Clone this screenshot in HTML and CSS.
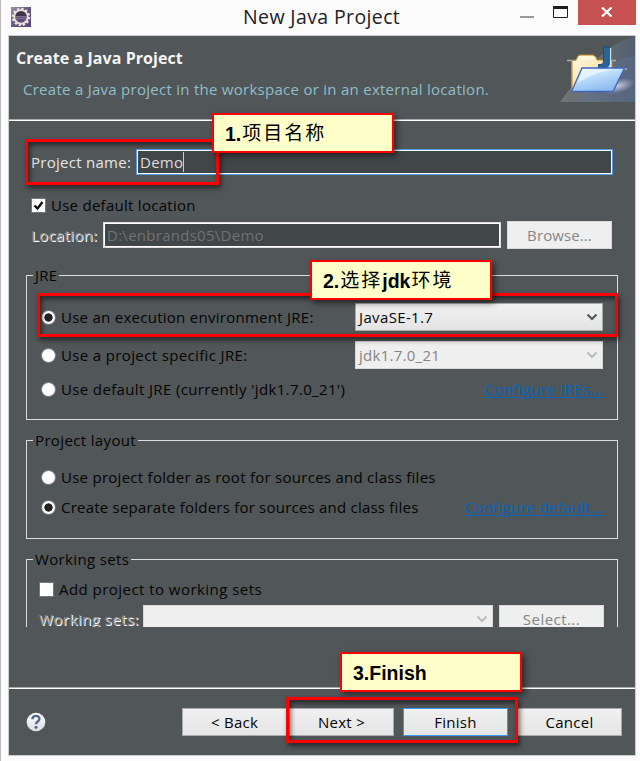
FILE: index.html
```html
<!DOCTYPE html>
<html lang="en">
<head>
<meta charset="utf-8">
<title>New Java Project</title>
<link rel="stylesheet" href="styles.css">
</head>
<body>
<div class="window">
  <header class="titlebar">
    <svg class="app-icon" viewBox="0 0 20 20">
      <defs><linearGradient id="purple" x2="1" y2="1"><stop stop-color="#9a91a8"/><stop offset=".5" stop-color="#67587c"/><stop offset="1" stop-color="#5e4181"/></linearGradient></defs>
      <path fill="url(#purple)" d="M0 0h20v20H0z"/>
      <circle cx="10" cy="10" r="8.200" fill="none" stroke="#eee9e5" stroke-width="2" stroke-dasharray="2.300 1.990"/>
      <circle cx="10" cy="10" r="6.700" fill="#5d5078" stroke="#e8e1dc" stroke-width="1.900"/>
      <path d="M4.400 9a5.700 5.700 0 0 1 11.200 0z" fill="#3b3748"/>
      <path d="M4.500 9.500h11M4.500 11.500h11" stroke="#8e81a0" stroke-width=".8"/>
    </svg>
    <h1><span class="t-title">New Java Project</span></h1>
    <div class="controls">
      <svg class="min-max" viewBox="0 0 50 25"><path d="M0 17h14" stroke="#999" stroke-width="2"/><path d="M33.500 8v9.500h14V8" fill="none" stroke="#1e1e1e"/><path d="M33 6h15v3H33z" fill="#1e1e1e"/></svg>
      <div class="close"><svg viewBox="0 0 12 10"><path d="M1 .5l9.500 9M10.500 .5L1 9.500" stroke="#fff" stroke-width="2.200"/></svg></div>
    </div>
  </header>
  <main class="dialog">
    <section class="banner">
      <div class="banner-text">
        <h2>Create a Java Project</h2>
        <p>Create a Java project in the workspace or in an external location.</p>
      </div>
      <svg class="banner-icon" viewBox="0 0 75 66">
        <defs>
          <linearGradient id="sweep" x2="1" y2=".2"><stop stop-color="#8c8e91"/><stop offset=".55" stop-color="#727982"/><stop offset="1" stop-color="#53627d"/></linearGradient>
          <linearGradient id="blue" x2=".5" y2="1"><stop stop-color="#e6f6ff"/><stop offset=".4" stop-color="#c1e1fc"/><stop offset="1" stop-color="#8ebaf0"/></linearGradient>
          <linearGradient id="gold" x2="1" y2="1"><stop stop-color="#fffbe6"/><stop offset="1" stop-color="#f3cf83"/></linearGradient>
          <radialGradient id="glow"><stop stop-color="#dcd9eb" stop-opacity=".85"/><stop offset="1" stop-color="#cccce0" stop-opacity="0"/></radialGradient>
        </defs>
        <path d="M0 66Q24 33 46 15 60 4 75 0V66z" fill="url(#sweep)" opacity=".65"/>
        <path d="M20 66Q28 43 46 29 60 22 75 20V66z" fill="#65789d" opacity=".35"/>
        <ellipse cx="58" cy="50" rx="17" ry="7" fill="url(#glow)" transform="rotate(-14 58 50)"/>
        <path d="M7 24.500h7M50 24.500h6M64 33h3" stroke="#aaabb9" stroke-width="1.500"/>
        <path d="M12 24.500L16 24l2-4 2-1h13l3 2 1 3h15v10L47 54H12z" fill="url(#gold)" stroke="#b98427"/>
        <path d="M17 23.500l2-3h14l2.500 3z" fill="#fff7dc"/>
        <path d="M11.500 25v29" stroke="#8b87b4"/>
        <path d="M43.500 11h6v17q0 5-4 5h-7v-4.500h2.500q2.500 0 2.500-3.500z" fill="#286498" stroke="#174d7b"/>
        <path d="M50.500 12v15q0 4-3 5" fill="none" stroke="#d5e4ef" stroke-width="1.300"/>
        <path d="M22 32h42.500L53 55.500H11.500z" fill="url(#blue)" stroke="#4265bd" stroke-width="1.300"/>
        <path d="M23 33.500h31Q35 36 17 47z" fill="#fff" opacity=".55"/>
      </svg>
    </section>
    <section class="content">
      <div class="row name-row">
        <span class="label light">Project name:</span>
        <div class="input focused"><span>Demo</span><i class="caret"></i></div>
      </div>
      <div class="row default-row">
        <svg class="check" viewBox="0 0 15 15"><path d="M.5 .5h14v14H.5z" fill="#fff" stroke="#777"/><path d="M3.500 7.500l3 3L11.500 4" fill="none" stroke="#111" stroke-width="2.400"/></svg>
        <span>Use default location</span>
      </div>
      <div class="row location-row">
        <span class="label embossed">Location:</span>
        <div class="input disabled"><span>D:\enbrands05\Demo</span></div>
        <div class="button off"><span>Browse...</span></div>
      </div>
      <fieldset class="jre">
        <legend>JRE</legend>
        <div class="row option"><i class="radio on"></i><span>Use an execution environment JRE:</span>
          <div class="combo"><span class="wide">JavaSE-1.7</span><svg viewBox="0 0 12 8"><path d="M1.500 1.500L6 6l4.500-4.500" fill="none" stroke="#555" stroke-width="2"/></svg></div></div>
        <div class="row option"><i class="radio"></i><span class="wide">Use a project specific JRE:</span>
          <div class="combo off"><span>jdk1.7.0_21</span><svg viewBox="0 0 12 8"><path d="M1.500 1.500L6 6l4.500-4.500" fill="none" stroke="#bbb" stroke-width="2"/></svg></div></div>
        <div class="row option last"><i class="radio"></i><span class="wide">Use default JRE (currently 'jdk1.7.0_21')</span>
          <a><span class="wide">Configure JREs...</span></a></div>
      </fieldset>
      <fieldset class="layout">
        <legend><span class="wide">Project layout</span></legend>
        <div class="row"><i class="radio"></i><span>Use project folder as root for sources and class files</span></div>
        <div class="row"><i class="radio on"></i><span class="snug">Create separate folders for sources and class files</span>
          <a>Configure default...</a></div>
      </fieldset>
      <div class="clip">
        <fieldset class="sets">
          <legend><span class="wide">Working sets</span></legend>
          <div class="row add-row"><svg class="check" viewBox="0 0 15 15"><path d="M.5 .5h14v14H.5z" fill="#fff" stroke="#777"/></svg><span class="wider">Add project to working sets</span></div>
          <div class="row sets-row">
            <span class="label embossed wider">Working sets:</span>
            <div class="combo off"><svg viewBox="0 0 12 8"><path d="M1.500 1.500L6 6l4.500-4.500" fill="none" stroke="#bbb" stroke-width="2"/></svg></div>
            <div class="button off"><span class="wider">Select...</span></div>
          </div>
        </fieldset>
      </div>
    </section>
    <footer class="actions">
      <svg class="help" viewBox="0 0 20 20"><defs><linearGradient id="pearl" x2="0" y2="1"><stop stop-color="#fff"/><stop offset="1" stop-color="#d9dce2"/></linearGradient></defs><circle cx="10" cy="10" r="9.300" fill="url(#pearl)"/><path d="M6.400 7.200C6.500 2.800 13.600 2.900 13.400 7c-.1 2.400-3.400 2.700-3.400 5.300" fill="none" stroke="#53678f" stroke-width="2.400"/><circle cx="10" cy="15.300" r="1.500" fill="#53678f"/></svg>
      <div class="buttons">
        <div class="pair"><div class="button">&lt; Back</div><div class="button">Next &gt;</div></div>
        <div class="button primary">Finish</div>
        <div class="button">Cancel</div>
      </div>
    </footer>
  </main>
  <div class="mark mark-name"></div>
  <div class="mark mark-jre"></div>
  <div class="mark mark-finish"></div>
  <div class="note note-name"><b>1.</b><span class="zh">项目名称</span></div>
  <div class="note note-jre"><b>2.</b><span class="zh">选择</span><b class="jdk">jdk</b><span class="zh">环境</span></div>
  <div class="note note-finish"><b>3.Finish</b></div>
</div>
</body>
</html>
```
FILE: styles.css
```css
* { box-sizing: border-box; }
body { margin: 0; background: #fbfbfb; color: #050505; font: 15px/20px "Open Sans", "Noto Sans", sans-serif; letter-spacing: .27px; overflow: hidden; }
span { white-space: nowrap; }
svg { display: block; flex: none; }
h1, h2, p { margin: 0; font-weight: 400; }
.wide { letter-spacing: .36px; }
.wider { letter-spacing: .46px; }
.snug { letter-spacing: .22px; }
.window { position: relative; width: 640px; height: 761px; border-left: 1px solid #bbb; padding-left: 7px; overflow: hidden; }
.titlebar { display: flex; height: 35px; align-items: flex-start; }
.app-icon { width: 20px; height: 20px; margin: 7px 0 0 3px; }
h1 { margin: 4px 0 0 212px; width: 277px; font-size: 19.5px; letter-spacing: .38px; line-height: 26px; color: #222; }
.controls { display: flex; }
.min-max { width: 50px; height: 25px; }
.close { width: 58px; height: 25px; margin-left: 8px; background: #c75050; display: flex; justify-content: center; padding-top: 7px; }
.close svg { width: 12px; height: 10px; }
.dialog { width: 628px; height: 721px; border: 1px solid #ccc; background: #515658; }
.banner { display: flex; justify-content: space-between; height: 85px; border-bottom: 1px solid #fff; box-shadow: inset 0 -1px #aaa; }
.banner-text { padding: 12px 0 0 7px; }
h2 { font-weight: 700; font-size: 16px; letter-spacing: .06px; color: #f5f5f5; }
.banner p { margin: 11px 0 0 7px; color: #91bdc9; }
.banner-icon { width: 75px; height: 66px; }
.content { height: 566px; padding: 28px 17px 0; }
.row { display: flex; align-items: center; }
.name-row { margin: 0 5px; height: 26px; }
.name-row .label { width: 105px; }
.light { color: #e6e6e6; }
.input { flex: 1; height: 26px; display: flex; align-items: center; background: #414649; border: 1px solid #569de5; box-shadow: inset 0 0 0 1px #fff; padding: 0 4px 0 3px; color: #ddd; }
.input.disabled { flex: none; width: 398px; border-color: #ddd; color: #707273; }
.caret { width: 1px; height: 20px; background: #ccc; }
.default-row { margin: 20px 0 0 5px; height: 20px; }
.check { width: 15px; height: 15px; margin-right: 5px; }
.location-row { margin: 6px 0 0 5px; height: 28px; }
.location-row .label { width: 72px; }
.location-row .button { margin-left: 6px; letter-spacing: .1px; }
.embossed { color: #8c8e8f; text-shadow: 1px 1px #fff; }
.button { width: 105px; height: 28px; display: flex; align-items: center; justify-content: center; border: 1px solid #aaa; background: linear-gradient(#f0f0f0, #e5e5e5); }
.button.off, .combo.off { background: #efefef; border-color: #d9d9d9; color: #858585; }
fieldset { position: relative; margin: 0; min-width: 0; padding: 0; border: 1px solid #ddd; width: 592px; }
legend { margin-left: 6px; padding: 0 2px; height: 20px; }
.jre { height: 155px; margin-top: 16px; }
.option { height: 28px; padding: 0 14px; margin-bottom: 10px; }
.jre .option:first-of-type { margin-top: 18px; }
.jre .last { margin-top: -4px; }
.radio { width: 15px; height: 15px; border: 1px solid #737779; border-radius: 50%; background: #fff; margin-right: 5px; flex: none; }
.radio.on { background: radial-gradient(circle, #222 0 3.800px, #fff 4.500px); }
.combo { width: 248px; height: 28px; margin-left: auto; border: 1px solid #aaa; padding: 0 4px 0 3px; display: flex; align-items: center; background: linear-gradient(#f0f0f0, #e4e4e4); }
.combo svg { width: 12px; height: 8px; margin-left: auto; }
a { margin-left: auto; color: #0765bd; text-decoration: underline; text-decoration-thickness: 1px; text-underline-offset: 2px; }
.layout { height: 109px; margin-top: 10px; }
.layout .row { height: 30px; padding: 0 14px; }
.layout .row:first-of-type { margin-top: 12px; }
.clip { height: 78px; margin-top: 10px; overflow: hidden; }
.sets { height: 120px; }
.add-row { margin: 10px 0 0 12px; height: 20px; }
.sets-row { margin: 6px 0 0 12px; height: 28px; }
.sets-row .label { width: 104px; }
.sets-row .combo { width: 350px; margin: 0 6px 0 0; }
.actions { height: 68px; border-top: 1px solid #aaa; box-shadow: inset 0 1px #fff; display: flex; justify-content: space-between; align-items: center; padding: 1px 13px 0 17px; }
.help { width: 20px; height: 20px; }
.buttons { display: flex; gap: 9px; }
.pair { display: flex; gap: 2px; }
.button.primary { border-color: #3399ff; }
.mark { position: absolute; border: 3px solid #f00; box-shadow: 2px 3px 5px rgba(0,0,0,.55), inset 2px 3px 5px rgba(0,0,0,.55); }
.mark-name { left: 24px; top: 139px; width: 194px; height: 46px; }
.mark-jre { left: 36px; top: 293px; width: 581px; height: 44px; }
.mark-finish { left: 285px; top: 697px; width: 232px; height: 46px; }
.note { position: absolute; width: 182px; height: 40px; border: 2px solid #f00; background: #ffffca; color: #000; box-shadow: 3px 3px 6px rgba(0,0,0,.5); display: flex; align-items: center; padding: 2px 0 0 11px; font: 19.5px/24px "Liberation Sans", "Noto Sans CJK SC", sans-serif; letter-spacing: 0; }
.zh { margin-left: 1px; font-size: 19px; letter-spacing: 2px; }
.note-name { left: 211px; top: 113px; }
.note-jre { left: 309px; top: 260px; }
.note-finish { left: 339px; top: 652px; }
```
